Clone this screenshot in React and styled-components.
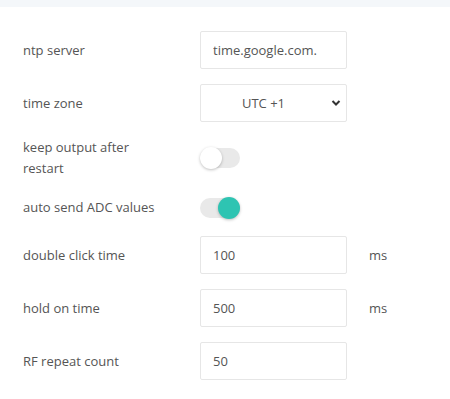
import React from "react";
import styled, { createGlobalStyle } from "styled-components";

const Global = createGlobalStyle`
  html, body { margin: 0; padding: 0; background: #fff; }
  body { font-family: "Open Sans", "Noto Sans", sans-serif; }
`;

const TopBand = styled.div`
  height: 7px;
  background: #f4f7fa;
`;

const Form = styled.div`
  display: flex;
  flex-direction: column;
  gap: 15px;
  padding: 24px 0 0 23px;
`;

const Row = styled.div`
  display: grid;
  grid-template-columns: 177px 147px auto;
  align-items: center;
  min-height: ${(p) => p.$min || 0}px;
`;

const Label = styled.div`
  font-size: 13px;
  line-height: 21px;
  color: #555;
  max-width: 140px;
`;

const Input = styled.input`
  box-sizing: border-box;
  width: 147px;
  height: 38px;
  border: 1px solid #e6e6e6;
  border-radius: 2px;
  padding: 0 12px;
  font-family: inherit;
  font-size: 13px;
  color: #555;
  outline: none;
  background: #fff;
`;

const SelectWrap = styled.div`
  position: relative;
  width: 147px;
  height: 38px;
`;

const Select = styled.select`
  box-sizing: border-box;
  width: 100%;
  height: 100%;
  border: 1px solid #e6e6e6;
  border-radius: 2px;
  background: #fff;
  appearance: none;
  font-family: inherit;
  font-size: 13px;
  color: #555;
  text-align: center;
  text-align-last: center;
  padding: 0 20px 0 0;
  outline: none;
`;

const Chevron = styled.svg`
  position: absolute;
  right: 6px;
  top: 15px;
  pointer-events: none;
`;

const Track = styled.div`
  position: relative;
  width: 40px;
  height: 20px;
  border-radius: 10px;
  background: #e9e9e9;
`;

const Knob = styled.div`
  position: absolute;
  top: -1px;
  left: ${(p) => (p.$on ? "18px" : "0")};
  width: 22px;
  height: 22px;
  border-radius: 50%;
  background: ${(p) => (p.$on ? "#2ec4b2" : "#fff")};
  box-shadow: 0 1px 3px rgba(0, 0, 0, 0.25);
`;

const Unit = styled.span`
  font-size: 13px;
  color: #555;
  padding-left: 22px;
`;

const Toggle = ({ on }) => (
  <Track>
    <Knob $on={on} />
  </Track>
);

export default function App() {
  return (
    <>
      <Global />
      <TopBand />
      <Form>
        <Row>
          <Label>ntp server</Label>
          <Input defaultValue="time.google.com." />
        </Row>
        <Row>
          <Label>time zone</Label>
          <SelectWrap>
            <Select defaultValue="1">
              <option value="1">UTC +1</option>
            </Select>
            <Chevron width="10" height="8" viewBox="0 0 10 8">
              <path d="M1.5 2 L5 5.5 L8.5 2" fill="none" stroke="#333" strokeWidth="2" />
            </Chevron>
          </SelectWrap>
        </Row>
        <Row>
          <Label>keep output after restart</Label>
          <Toggle on={false} />
        </Row>
        <Row $min={27}>
          <Label>auto send ADC values</Label>
          <Toggle on />
        </Row>
        <Row>
          <Label>double click time</Label>
          <Input defaultValue="100" />
          <Unit>ms</Unit>
        </Row>
        <Row>
          <Label>hold on time</Label>
          <Input defaultValue="500" />
          <Unit>ms</Unit>
        </Row>
        <Row>
          <Label>RF repeat count</Label>
          <Input defaultValue="50" />
        </Row>
      </Form>
    </>
  );
}
